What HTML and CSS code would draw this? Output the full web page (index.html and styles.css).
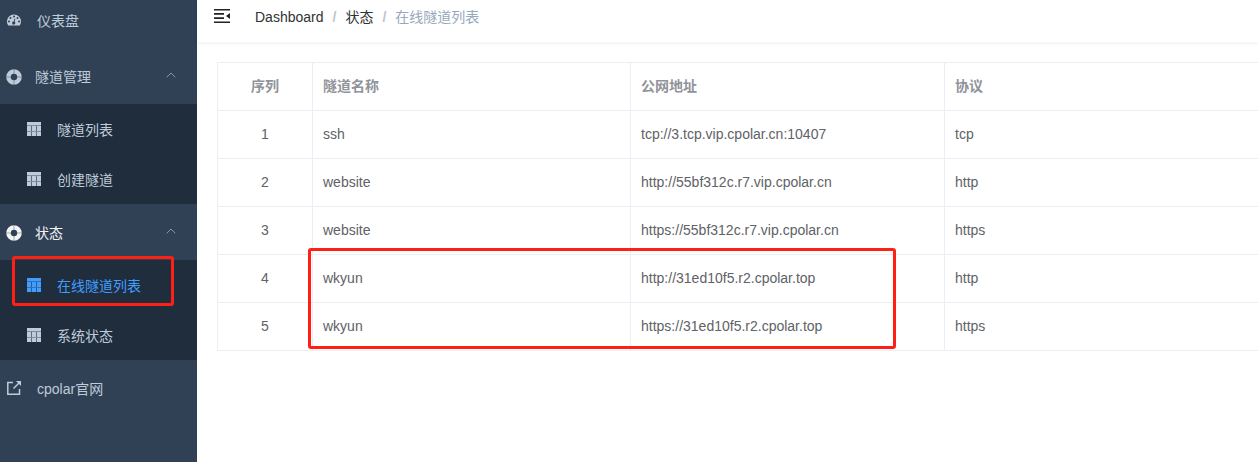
FILE: index.html
```html
<!DOCTYPE html>
<html lang="zh-CN">
<head>
	<meta charset="utf-8">
	<title>在线隧道列表</title>
	<meta name="viewport" content="width=device-width, initial-scale=1.0">
	<link rel="stylesheet" href="styles.css">
</head>

<body>
	<!-- shared icons -->
	<svg class="sprite" aria-hidden="true">
		<symbol id="icon-ring" viewBox="0 0 16 16">
			<circle cx="8" cy="8" r="5.500" fill="none" stroke="currentColor" stroke-width="4.600" />
			<path d="M8 0v5M8 11v5M0 8h5M11 8h5" stroke="#304156" stroke-width="1" opacity=".4" />
		</symbol>
		<symbol id="icon-table" viewBox="0 0 14 14">
			<path d="M0 0h14v3H0zM0 4h4v5H0zM5 4h4v5H5zM10 4h4v5h-4zM0 10h4v4H0zM5 10h4v4H5zM10 10h4v4h-4z" fill="currentColor" />
			<path d="M0 3h14v1H0zM0 9h14v1H0z" fill="currentColor" opacity=".6" />
			<path d="M4 4h1v5H4zM9 4h1v5H9zM4 10h1v4H4zM9 10h1v4H9z" fill="currentColor" opacity=".4" />
		</symbol>
		<symbol id="icon-arrow" viewBox="0 0 10 6">
			<path d="M.7 5.300L5 1l4.300 4.300" fill="none" stroke="currentColor" />
		</symbol>
	</svg>

	<div class="app">
		<nav class="sidebar">
			<a class="menu-item menu-first" href="#">
				<svg class="icon" viewBox="0 0 14 14">
					<path fill="currentColor" fill-rule="evenodd" d="M7 1.500a7 7 0 0 1 7 7c0 1.400-.4 2.600-1.100 3.700-.1.200-.3.300-.5.300H1.600c-.2 0-.4-.1-.5-.3A7 7 0 0 1 7 1.500zM2 7.500a1 1 0 1 0 0 2 1 1 0 0 0 0-2zM3.500 4a1 1 0 1 0 0 2 1 1 0 0 0 0-2zM7 2.500a1 1 0 1 0 0 2 1 1 0 0 0 0-2zM10.500 4a1 1 0 1 0 0 2 1 1 0 0 0 0-2zM12 7.500a1 1 0 1 0 0 2 1 1 0 0 0 0-2zM7.600 5.500l-.9 3a1.500 1.500 0 1 0 .9.300l.8-3z" />
				</svg>
				<span>仪表盘</span>
			</a>

			<button class="menu-item menu-title" type="button" aria-expanded="true">
				<svg class="icon icon-ring"><use href="#icon-ring" /></svg>
				<span>隧道管理</span>
				<svg class="arrow"><use href="#icon-arrow" /></svg>
			</button>
			<div class="submenu">
				<a class="submenu-item" href="#">
					<svg class="icon"><use href="#icon-table" /></svg>
					<span>隧道列表</span>
				</a>
				<a class="submenu-item" href="#">
					<svg class="icon"><use href="#icon-table" /></svg>
					<span>创建隧道</span>
				</a>
			</div>

			<button class="menu-item menu-title open" type="button" aria-expanded="true">
				<svg class="icon icon-ring"><use href="#icon-ring" /></svg>
				<span>状态</span>
				<svg class="arrow"><use href="#icon-arrow" /></svg>
			</button>
			<div class="submenu">
				<a class="submenu-item active" href="#">
					<svg class="icon"><use href="#icon-table" /></svg>
					<span>在线隧道列表</span>
				</a>
				<a class="submenu-item" href="#">
					<svg class="icon"><use href="#icon-table" /></svg>
					<span>系统状态</span>
				</a>
				<div class="mark mark-menu"></div>
			</div>

			<a class="menu-item" href="#">
				<svg class="icon" viewBox="0 0 14 14">
					<path d="M6 1.500H.8v11.700h11.700V8" fill="none" stroke="currentColor" stroke-width="1.500" />
					<path d="M6.500 7.500l6-6" fill="none" stroke="currentColor" stroke-width="1.500" />
					<path d="M9 0h5v5z" fill="currentColor" />
				</svg>
				<span>cpolar官网</span>
			</a>
		</nav>

		<div class="main">
			<header class="navbar">
				<button class="hamburger" type="button" aria-label="menu">
					<svg viewBox="0 0 16 14">
						<path d="M0 .8h16M0 4.900h10M0 9.100h10M0 13.200h16" fill="none" stroke="currentColor" stroke-width="1.600" />
						<path d="M16 4v6l-4-3z" fill="currentColor" />
					</svg>
				</button>
				<div class="breadcrumb">
					<a href="#">Dashboard</a>
					<span class="sep">/</span>
					<a href="#">状态</a>
					<span class="sep">/</span>
					<span class="current">在线隧道列表</span>
				</div>
			</header>

			<main class="content">
				<table class="tunnels">
					<thead>
						<tr>
							<th class="col-index">序列</th>
							<th class="col-name">隧道名称</th>
							<th class="col-url">公网地址</th>
							<th>协议</th>
						</tr>
					</thead>
					<tbody>
						<tr>
							<td class="col-index">1</td>
							<td>ssh</td>
							<td>tcp://3.tcp.vip.cpolar.cn:10407</td>
							<td>tcp</td>
						</tr>
						<tr>
							<td class="col-index">2</td>
							<td>website</td>
							<td>http://55bf312c.r7.vip.cpolar.cn</td>
							<td>http</td>
						</tr>
						<tr>
							<td class="col-index">3</td>
							<td>website</td>
							<td>https://55bf312c.r7.vip.cpolar.cn</td>
							<td>https</td>
						</tr>
						<tr>
							<td class="col-index">4</td>
							<td>wkyun</td>
							<td>http://31ed10f5.r2.cpolar.top</td>
							<td>http</td>
						</tr>
						<tr>
							<td class="col-index">5</td>
							<td>wkyun</td>
							<td>https://31ed10f5.r2.cpolar.top</td>
							<td>https</td>
						</tr>
					</tbody>
				</table>
				<div class="mark mark-rows"></div>
			</main>
		</div>
	</div>
</body>

</html>
```
FILE: styles.css
```css
* {
	box-sizing: border-box;
}

body {
	margin: 0;
	font-family: "Liberation Sans", "Noto Sans CJK SC", sans-serif;
	font-size: 14px;
	color: #606266;
	background-color: #fff;
}

a {
	color: inherit;
	text-decoration: none;
}

button {
	border: none;
	background: none;
	font: inherit;
	cursor: pointer;
}

.sprite {
	position: absolute;
	width: 0;
	height: 0;
}

.app {
	display: flex;
	min-height: 100vh;
}

/* sidebar */
.sidebar {
	flex: 0 0 197px;
	background-color: #304156;
	color: #bfcbd9;
}

.menu-item {
	display: flex;
	align-items: center;
	gap: 16px;
	width: 100%;
	height: 56px;
	padding: 0 21px 0 7px;
	text-align: left;
}

.menu-first {
	height: 48px;
	padding-bottom: 8px;
}

.menu-title {
	gap: 13px;
	padding-left: 6px;
	color: #bfcbd9;
}

.menu-title.open {
	color: #f4f4f5;
}

.icon {
	flex: none;
	width: 14px;
	height: 14px;
}

.icon-ring {
	width: 16px;
	height: 16px;
	margin-top: 2px;
}

.arrow {
	width: 10px;
	height: 6px;
	margin-left: auto;
	margin-bottom: 2px;
	color: #909399;
}

.submenu {
	position: relative;
	background-color: #1f2d3d;
}

.submenu-item {
	display: flex;
	align-items: center;
	gap: 16px;
	height: 50px;
	padding-left: 27px;
}

.submenu-item.active {
	color: #409eff;
}

/* top bar */
.main {
	flex: 1;
	min-width: 0;
}

.navbar {
	display: flex;
	align-items: center;
	height: 42px;
	padding: 0 17px 10px;
	box-shadow: 0 1px 4px rgba(0, 21, 41, .08);
}

.hamburger {
	padding: 0;
	margin-right: 25px;
	color: #222;
}

.hamburger svg {
	display: block;
	width: 16px;
	height: 14px;
}

.breadcrumb {
	display: flex;
	align-items: baseline;
	color: #303133;
}

.sep {
	margin: 0 9px;
	font-weight: bold;
	color: #c0c4cc;
}

.current {
	color: #97a8be;
}

/* table */
.content {
	position: relative;
	padding: 20px 0 0 20px;
}

.tunnels {
	width: 100%;
	table-layout: fixed;
	border-collapse: separate;
	border-spacing: 0;
	border-top: 1px solid #ebeef5;
	border-left: 1px solid #ebeef5;
}

.tunnels th,
.tunnels td {
	height: 48px;
	padding: 0 10px 2px;
	border-right: 1px solid #ebeef5;
	border-bottom: 1px solid #ebeef5;
	text-align: left;
}

.tunnels th {
	padding-bottom: 4px;
	color: #909399;
}

.tunnels th:last-child,
.tunnels td:last-child {
	border-right: none;
}

.tunnels .col-index {
	width: 95px;
	text-align: center;
}

.tunnels .col-name {
	width: 318px;
}

.tunnels .col-url {
	width: 314px;
}

/* red highlight boxes */
.mark {
	position: absolute;
	border: 3px solid #ff2015;
	border-radius: 3px;
	pointer-events: none;
}

.mark-menu {
	top: -4px;
	left: 12px;
	width: 162px;
	height: 50px;
}

.mark-rows {
	top: 206px;
	left: 111px;
	width: 588px;
	height: 101px;
}
```
